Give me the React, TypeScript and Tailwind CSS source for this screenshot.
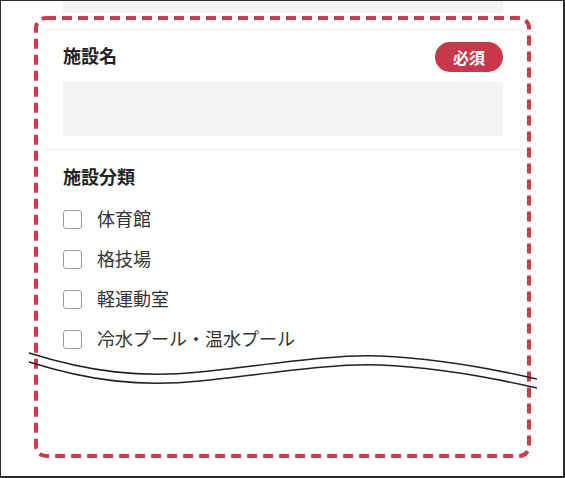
import React from "react";

const categories = ["体育館", "格技場", "軽運動室", "冷水プール・温水プール"];

function Checkbox({ label }: { label: string }) {
  return (
    <label className="flex h-[40px] items-center gap-[15px]">
      <span className="h-[19px] w-[19px] shrink-0 rounded-[3px] border-[1.5px] border-[#9a9a9a] bg-white" />
      <span className="pb-[2px] text-[18px] leading-none text-[#333]">{label}</span>
    </label>
  );
}

export default function App() {
  return (
    <div
      className="relative h-[478px] w-[565px] overflow-hidden bg-white"
      style={{ fontFamily: '"Noto Sans CJK JP", "Noto Sans", sans-serif' }}
    >
      {/* form, only the middle part is shown */}
      <div className="ml-[43px] w-[480px]">
        {/* tail of the previous field */}
        <div className="border-b border-[#eceef1] px-5 pb-4">
          <div className="h-[13px] bg-[#f2f3f5]" />
        </div>

        <div className="border-b border-[#eceef1] px-5 pb-[13px] pt-[12px]">
          <div className="flex h-[30px] items-center justify-between">
            <span className="pb-[5px] text-[18px] font-bold leading-none text-[#222]">施設名</span>
            <span className="flex h-[30px] w-[68px] items-center justify-center rounded-full bg-[#c9384a] pb-[1px] text-[16px] font-bold leading-none text-white">
              必須
            </span>
          </div>
          <div className="mt-[10px] h-[54px] bg-[#f2f3f5]" />
        </div>

        <div className="px-5 pt-[12px]">
          <div className="flex h-[28px] items-center text-[18px] font-bold leading-none text-[#222]">
            施設分類
          </div>
          <div className="mt-[9px] flex flex-col">
            {categories.map((c) => (
              <Checkbox key={c} label={c} />
            ))}
          </div>
        </div>
      </div>

      {/* dashed annotation frame and omission wave */}
      <svg
        className="pointer-events-none absolute left-0 top-0"
        width="565"
        height="478"
        viewBox="0 0 565 478"
      >
        <rect
          x="36"
          y="18"
          width="493"
          height="438"
          rx="10"
          fill="none"
          stroke="#cd3b4c"
          strokeWidth="4"
          strokeDasharray="10 6"
        />
        <path
          d="M29 353 C 90 372, 140 378, 200 372 S 330 354, 380 356 S 480 366, 537 379"
          fill="none"
          stroke="#222"
          strokeWidth="1.6"
        />
        <path
          d="M29 362 C 90 381, 140 387, 200 381 S 330 363, 380 365 S 480 375, 537 388"
          fill="none"
          stroke="#222"
          strokeWidth="1.6"
        />
      </svg>

      {/* screenshot frame */}
      <div className="pointer-events-none absolute inset-0 border-b-2 border-l border-r-2 border-t border-[#2b2b2b]" />
    </div>
  );
}
